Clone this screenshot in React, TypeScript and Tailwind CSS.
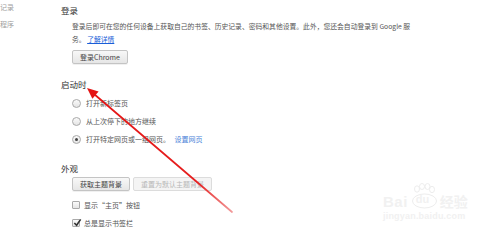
import React from 'react'

const font = { fontFamily: '"Noto Sans CJK SC", "Noto Sans", sans-serif' }

const Radio = ({ checked = false }: { checked?: boolean }) => (
  <span className="w-[9px] h-[9px] rounded-full border border-[#a9a9a9] bg-linear-to-b from-[#fafafa] to-[#e4e4e4] flex items-center justify-center shrink-0">
    {checked && <span className="w-[3px] h-[3px] rounded-full bg-[#444]" />}
  </span>
)

const Checkbox = ({ checked = false }: { checked?: boolean }) => (
  <span className="relative w-[8px] h-[8px] rounded-[1px] border border-[#a9a9a9] bg-linear-to-b from-[#fafafa] to-[#e4e4e4] shrink-0">
    {checked && (
      <svg viewBox="0 0 10 10" className="absolute left-[0px] top-[-2px] w-[9px] h-[9px]">
        <path d="M1.5 5.5 L4 8 L8.5 1.5" fill="none" stroke="#333" strokeWidth="1.8" />
      </svg>
    )}
  </span>
)

const Button = ({ children, disabled = false }: { children: React.ReactNode; disabled?: boolean }) => (
  <div
    className={`h-[14px] px-[7px] flex items-center rounded-[2px] border text-[7px] leading-none whitespace-nowrap ${
      disabled
        ? 'border-[#dcdcdc] bg-[#f4f4f4] text-[#b8b8b8]'
        : 'border-[#c4c4c4] bg-linear-to-b from-[#f8f8f8] to-[#e6e6e6] text-[#444] shadow-[0_1px_0_rgba(0,0,0,0.06)]'
    }`}
  >
    {children}
  </div>
)

const Heading = ({ children, className = '' }: { children: React.ReactNode; className?: string }) => (
  <h3 className={`h-[12px] leading-[12px] text-[8.5px] text-[#303030] ${className}`}>{children}</h3>
)

export default function App() {
  return (
    <div className="relative w-[500px] h-[239px] bg-white overflow-hidden flex" style={font}>
      {/* Sidebar */}
      <div className="w-[61px] shrink-0 pt-[2px] text-[7px] leading-[10px] text-[#a0a0a0]">
        <div>记录</div>
        <div className="mt-[7px]">程序</div>
      </div>

      {/* Main */}
      <div className="flex flex-col pt-[4px]">
        <Heading>登录</Heading>
        <div className="ml-[11px] mt-[3.5px] text-[6.8px] leading-[13px] text-[#555]">
          <div className="whitespace-nowrap">
            登录后即可在您的任何设备上获取自己的书签、历史记录、密码和其他设置。此外，您还会自动登录到 Google 服
          </div>
          <div className="whitespace-nowrap">
            务。 <span className="text-[#1a5ed8] underline">了解详情</span>
          </div>
        </div>
        <div className="ml-[11px] mt-[4.5px] flex">
          <Button>登录Chrome</Button>
        </div>

        <Heading className="mt-[14px]">启动时</Heading>
        <div className="ml-[11px] mt-[4px] flex flex-col text-[7px] text-[#555]">
          <label className="h-[18px] flex items-center gap-[5px]">
            <Radio />
            打开新标签页
          </label>
          <label className="h-[18px] flex items-center gap-[5px]">
            <Radio />
            从上次停下的地方继续
          </label>
          <label className="h-[18px] flex items-center gap-[5px]">
            <Radio checked />
            <span>
              打开特定网页或一组网页。 <span className="ml-[3px] text-[#4a7fd8]">设置网页</span>
            </span>
          </label>
        </div>

        <Heading className="mt-[14px]">外观</Heading>
        <div className="ml-[11px] mt-[3px] flex gap-[3px]">
          <Button>获取主题背景</Button>
          <Button disabled>重置为默认主题背景</Button>
        </div>
        <div className="ml-[11px] mt-[5px] flex flex-col text-[7px] text-[#555]">
          <label className="h-[18px] flex items-center gap-[4px]">
            <Checkbox />
            显示“主页”按钮
          </label>
          <label className="h-[18px] flex items-center gap-[4px]">
            <Checkbox checked />
            总是显示书签栏
          </label>
        </div>
      </div>

      {/* Red annotation arrow */}
      <svg className="absolute inset-0 pointer-events-none" width="500" height="239" viewBox="0 0 500 239">
        <defs>
          <linearGradient id="fade" gradientUnits="userSpaceOnUse" x1="95" y1="94" x2="232" y2="212">
            <stop offset="0" stopColor="#e41414" />
            <stop offset="0.75" stopColor="#e62020" />
            <stop offset="1" stopColor="#f29a9a" />
          </linearGradient>
        </defs>
        <line x1="232" y1="212" x2="94" y2="94" stroke="url(#fade)" strokeWidth="1.7" strokeLinecap="round" />
        <polygon points="87,88 98.6,91.6 92.4,98.8" fill="#e41414" />
      </svg>

      {/* Baidu watermark */}
      <div className="absolute left-[383px] top-[183px] pointer-events-none text-[#f1f1f1]">
        <div className="flex items-end">
          <span className="text-[15px] font-bold leading-[15px] tracking-[0.5px]" style={{ fontFamily: '"Liberation Sans", sans-serif' }}>
            Bai
          </span>
          <div className="relative w-[30px] h-[26px] mx-[1px]">
            <svg viewBox="0 0 30 26" className="absolute inset-0 w-[30px] h-[26px]">
              <g fill="none" stroke="#ededed" strokeWidth="1">
                <ellipse cx="8" cy="6" rx="2.5" ry="3.2" />
                <ellipse cx="13" cy="3.5" rx="2.5" ry="3" />
                <ellipse cx="18.5" cy="3.5" rx="2.5" ry="3" />
                <ellipse cx="23" cy="6.5" rx="2.5" ry="3.2" />
                <ellipse cx="15.5" cy="18" rx="12" ry="7" />
              </g>
            </svg>
            <span
              className="absolute left-[7px] top-[11px] text-[11px] font-bold leading-[11px]"
              style={{ fontFamily: '"Liberation Sans", sans-serif' }}
            >
              du
            </span>
          </div>
          <span className="text-[14px] font-bold leading-[15px]">经验</span>
        </div>
        <div
          className="mt-[3px] text-[9px] font-bold leading-[9px] tracking-[0.2px]"
          style={{ fontFamily: '"Liberation Sans", sans-serif' }}
        >
          jingyan.baidu.com
        </div>
      </div>
    </div>
  )
}
